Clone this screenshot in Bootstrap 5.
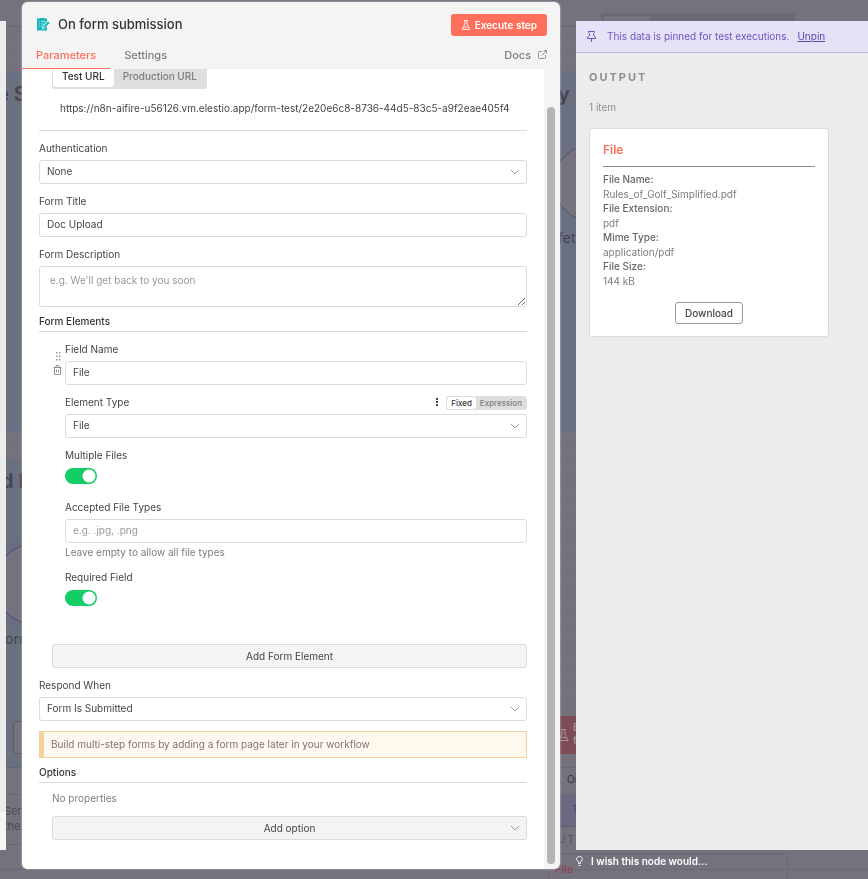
<!DOCTYPE html>
<html lang="en">
<head>
<meta charset="utf-8">
<meta name="viewport" content="width=device-width, initial-scale=1">
<title>On form submission</title>
<link href="https://cdn.jsdelivr.net/npm/bootstrap@5.3.0/dist/css/bootstrap.min.css" rel="stylesheet">
<style>
:root { --line: #dbdbdb; --ink: #444; --soft: #7d7d7d; --coral: #ff6f5c; }
body { font-family: Inter, "Liberation Sans", sans-serif; font-size: 10px; line-height: 16px; color: var(--ink); background: #75727e; }
.canvas-bg { position: fixed; inset: 0; width: 100%; height: 100%; z-index: -1; }
.stage { display: grid; grid-template-columns: 6px minmax(0, 538px) minmax(240px, 1fr); column-gap: 16px; min-height: 100vh; }
.input-edge { background: #ececec; margin: 21px 0 29px; border-bottom: 38px solid #f5f5f5; }
.node-panel { margin: 2px 0 10px; border-radius: 6px; background: #f4f4f4; box-shadow: 0 0 2px #ddd; }
.node-title { font-size: 13px; line-height: 20px; font-weight: 500; color: #333; }
.node-head { padding: 12px 13px 0 15px; height: 41px; }
.btn-run { background: var(--coral); color: #fff; font-size: 10px; font-weight: 600; line-height: 14px; padding: 4px 10px; border-radius: 3px; }
.btn-run:hover { background: #f0604d; color: #fff; }
.tab-row { height: 26px; font-size: 11px; padding-right: 13px; }
.tab-row a { color: var(--soft); font-weight: 500; text-decoration: none; padding: 0 14px; line-height: 26px; border-bottom: 1px solid transparent; }
.tab-row a.active { color: var(--coral); border-color: var(--coral); }
.tab-row a.docs { padding: 0; }
.form-pane { background: #fff; padding: 0 17px 28px 17px; border-bottom-left-radius: 6px; }
.scroll-rail { width: 16px; padding: 38px 5px 5px 3px; }
.scroll-thumb { background: #b5b5b5; border-radius: 4px; }
.seg { background: #dedede; border-radius: 3px; padding: 1px; }
.seg button { border: 0; background: transparent; color: var(--soft); border-radius: 3px; font-weight: 500; }
.seg button.on { background: #fff; color: #333; }
.url-seg { margin: -5px 0 0 13px; padding: 1px 1px 2px; }
.url-seg button { padding: 0 9px; line-height: 22px; }
.url-text { padding: 11px 0 14px 21px; border-bottom: 1px solid var(--line); }
.lab { display: block; margin: 9px 0 4px; color: var(--ink); }
.form-pane .form-control, .form-pane .form-select { font-size: 10px; line-height: 16px; height: 24px; min-height: 24px; padding: 2px 7px 4px; border: 1px solid var(--line); border-radius: 3px; color: var(--ink); }
.form-pane .form-control::placeholder { color: #999; }
.form-pane .form-select { background-image: url("data:image/svg+xml,%3Csvg xmlns='http://www.w3.org/2000/svg' viewBox='0 0 10 10'%3E%3Cpath d='M1 3l4 4 4-4' fill='none' stroke='%23999'/%3E%3C/svg%3E"); background-size: 10px 10px; background-position: right 6px center; }
.form-pane textarea.form-control { height: 41px; padding: 5px 10px; resize: vertical; }
.sec { margin: 6px 0 0; padding-bottom: 2px; font-weight: 500; font-size: 10px; line-height: 16px; color: #333; border-bottom: 1px solid var(--line); }
.tools { width: 26px; padding: 20px 3px 0 0; }
.tools button { border: 0; background: none; padding: 0; line-height: 0; }
.tools .grip { margin-right: 1px; }
.mode-seg { margin-top: 6px; }
.mode-seg button { font-size: 8px; line-height: 12px; padding: 0 4px; }
.form-pane .form-switch { padding: 0; min-height: 16px; margin: 5px 0 15px; line-height: 0; }
.form-pane .form-switch .form-check-input { margin: 0; float: none; width: 32px; height: 16px; border: 0; background-color: #13ce66; background-size: 16px 16px; background-image: url("data:image/svg+xml,%3Csvg xmlns='http://www.w3.org/2000/svg' viewBox='0 0 16 16'%3E%3Ccircle cx='8' cy='8' r='6.5' fill='%23fff'/%3E%3C/svg%3E"); }
.btn-wide, .form-pane .form-select.btn-wide { background-color: #f4f4f4; border: 1px solid var(--line); border-radius: 3px; font-size: 10px; line-height: 16px; padding: 3px; color: var(--ink); text-align: center; }
.add-row { margin: 23px 0 0 13px; }
.tip { margin-top: 10px; background: #fff8ee; border: 1px solid #f5d09a; border-left-width: 5px; padding: 4px 7px 5px; color: #7a7672; }
.opts { padding-left: 13px; }
.none-text { margin: 7px 0 10px; color: var(--soft); }
.hint { color: var(--soft); margin-top: 1px; }
.out-pane { background: #ececec; margin-top: 21px; }
.pin-bar { background: #e6e1f6; border-bottom: 1px solid #bdb1ea; color: #6a55c0; padding: 7px 11px 8px; gap: 11px; }
.pin-bar a { color: #5a45b5; margin-left: -3px; }
.out-body { padding: 16px 13px; }
.out-title { font-size: 11px; font-weight: 700; letter-spacing: 2px; color: #8d8d8d; line-height: 16px; margin: 0; }
.count { margin-top: 14px; color: #8d8d8d; }
.file-box { border: 1px solid #dcdcdc; border-radius: 3px; width: 240px; max-width: 100%; padding: 13px 13px 12px; margin-top: 13px; }
.file-box h2 { font-size: 12px; line-height: 16px; font-weight: 600; color: var(--coral); margin: 0 0 5px; padding-bottom: 8px; border-bottom: 1px solid #8c8c8c; }
.file-box dl { line-height: 14px; color: var(--soft); margin: 0 0 14px; }
.file-box dt { font-weight: 500; color: #666; line-height: 15px; }
.file-box dd { margin: 0; line-height: 14px; }
.btn-get { border: 1px solid #999; border-radius: 3px; font-size: 10px; line-height: 16px; padding: 2px 9px; font-weight: 500; color: #444; }
.wish { height: 29px; color: #fff; font-weight: 600; text-decoration: none; padding-bottom: 7px; }
</style>
<script src="https://cdn.jsdelivr.net/npm/bootstrap@5.3.0/dist/js/bootstrap.bundle.min.js"></script>
</head>
<body>
<svg class="canvas-bg" aria-hidden="true" font-family="Inter, sans-serif">
  <defs><pattern id="dots" width="14" height="14" patternUnits="userSpaceOnUse"><rect x="1" y="10" width="1" height="1" fill="#5c5966"/></pattern></defs>
  <rect width="100%" height="100%" fill="#75727e"/>
  <rect y="27" width="100%" height="740" fill="url(#dots)"/>
  <path d="M0 26.500H868" stroke="#6a6773"/>
  <rect x="-5" y="73" width="900" height="358" fill="#6b7081" stroke="#62708a"/>
  <rect x="-5" y="460" width="200" height="307" fill="#6b7081" stroke="#62708a"/>
  <rect x="601" y="13" width="194" height="20" rx="3" fill="#6c6975"/><rect x="604" y="16" width="46" height="14" rx="2" fill="#75727e"/>
  <g fill="#44434f" font-weight="600" font-size="20"><text x="-3" y="101">e S</text><text x="558" y="101">y</text><text x="1" y="488">d I</text></g>
  <g fill="#44434f" font-size="14"><text x="558" y="243">fet</text><text x="5" y="644">orm</text></g>
  <circle cx="593" cy="183" r="39" fill="#75727e" stroke="#55525f"/>
  <circle cx="36" cy="584" r="46" fill="#6b6c81"/><circle cx="36" cy="584" r="41" fill="#75727e" stroke="#4b4a78"/>
  <rect x="13.500" y="721.500" width="60" height="32" rx="3" fill="#75727e" stroke="#5e5b67"/>
  <rect x="540" y="716" width="120" height="38" fill="#7e4c57"/>
  <path d="M561 729.500h5M562 730v4l-3 6.500h9l-3-6.500v-4M560.500 737.500h6" fill="none" stroke="#a0929c"/>
  <g fill="#a0929c" font-size="10" font-weight="600"><text x="573" y="731">E</text><text x="573" y="744">f</text></g>
  <path d="M0 767.500H868M0 794.500H24M0 844.500H24" stroke="#696672"/>
  <rect x="550" y="794" width="40" height="32" fill="#6d6880"/><path d="M550 826.500h40" stroke="#5d5880"/>
  <g font-size="11" fill="#4c4a55"><text x="4" y="815">Ser</text><text x="4" y="830">the</text></g>
  <g font-size="10"><text x="567" y="783" fill="#33323c">Or</text><text x="572" y="813" fill="#4c4490">T</text><text x="558" y="843" fill="#55525e" letter-spacing="2">UT</text></g>
  <rect x="548.500" y="853.500" width="239" height="40" rx="2" fill="none" stroke="#696672"/>
  <path d="M0 869.500H868" stroke="#6c6975"/>
  <text x="555" y="873" font-size="11" font-weight="500" fill="#8a4450">File</text>
</svg>

<div class="stage">
  <div class="input-edge"></div>

  <main class="node-panel d-flex flex-column">
    <header class="node-head d-flex align-items-start">
      <svg class="me-2 mt-1" width="13" height="13" viewBox="0 0 13 13" aria-hidden="true"><path d="M0 .5h2.500V0h5v.5H10V3L6 7.500l-1 3.500 3-1 2-2v4.500H0z" fill="#15b8bd"/><path d="M6 10.500l.500-2.500 4.500-5 2 2-4.500 4.500z" fill="#15b8bd" stroke="#f4f4f4" stroke-width=".5"/><path d="M2 3.500h1M4 3.500h4M2 6h1M4 6h2.500M2 8.500h1M4 8.500h1" stroke="#c9f0f0" stroke-width=".8"/></svg>
      <h1 class="node-title mb-0 flex-grow-1">On form submission</h1>
      <button type="button" class="btn btn-run border-0 d-flex align-items-center gap-1"><svg width="10" height="10" viewBox="0 0 10 10" fill="none" stroke="#fff" stroke-width=".9" aria-hidden="true"><path d="M3 .5h4M4 .5v3.500L1.200 9.300h7.600L6 4V.5M2.500 7h5"/></svg>Execute step</button>
    </header>
    <nav class="tab-row d-flex align-items-end">
      <a class="active" href="#parameters">Parameters</a>
      <a href="#settings">Settings</a>
      <a class="docs ms-auto" href="#docs">Docs <svg width="9" height="9" viewBox="0 0 9 9" fill="none" stroke="#888" stroke-width=".9" class="ms-1 mb-1" aria-hidden="true"><path d="M4 1.500H1.500q-1 0-1 1v5q0 1 1 1h5q1 0 1-1V5M5.500.500h3v3M8.500.500l-5 5"/></svg></a>
    </nav>
    <div class="d-flex flex-grow-1">
      <form class="form-pane flex-grow-1 overflow-hidden">
        <div class="seg url-seg d-inline-flex align-top" role="group" aria-label="URL type">
          <button type="button" class="on">Test URL</button><button type="button">Production URL</button>
        </div>
        <div class="url-text">https://n8n-aifire-u56126.vm.elestio.app/form-test/2e20e6c8-8736-44d5-83c5-a9f2eae405f4</div>

        <label class="lab" for="auth">Authentication</label>
        <select class="form-select" id="auth"><option>None</option></select>
        <label class="lab" for="title">Form Title</label>
        <input class="form-control" id="title" value="Doc Upload">
        <label class="lab" for="desc">Form Description</label>
        <textarea class="form-control d-block" id="desc" placeholder="e.g. We'll get back to you soon"></textarea>

        <h2 class="sec">Form Elements</h2>
        <div class="d-flex">
          <div class="tools d-flex flex-column align-items-end gap-1">
            <button type="button" aria-label="Drag to reorder" class="grip"><svg width="6" height="9" viewBox="0 0 6 9" fill="#999"><path d="M1 0h1.500v1.500H1zM4 0h1.500v1.500H4zM1 3.500h1.500V5H1zM4 3.500h1.500V5H4zM1 7h1.500v1.500H1zM4 7h1.500v1.500H4z"/></svg></button>
            <button type="button" aria-label="Delete element"><svg width="9" height="10" viewBox="0 0 9 10" fill="none" stroke="#888" stroke-width=".9"><path d="M.5 2.500h8M1.500 2.500v7h6v-7M3 2.500v-2h3v2M3.500 4.500v3M5.500 4.500v3"/></svg></button>
          </div>
          <div class="flex-grow-1">
            <label class="lab" for="fname">Field Name</label>
            <input class="form-control" id="fname" value="File">
            <div class="d-flex align-items-center">
              <label class="lab" for="etype">Element Type</label>
              <svg class="ms-auto me-2 mt-1" width="2" height="8" viewBox="0 0 2 8" fill="#444" aria-hidden="true"><path d="M0 0h2v2H0zM0 3h2v2H0zM0 6h2v2H0z"/></svg>
              <div class="seg mode-seg d-flex" role="group" aria-label="Value mode"><button type="button" class="on">Fixed</button><button type="button">Expression</button></div>
            </div>
            <select class="form-select" id="etype"><option>File</option></select>
            <label class="lab mb-0" for="multi">Multiple Files</label>
            <div class="form-check form-switch"><input class="form-check-input" type="checkbox" role="switch" id="multi" checked></div>
            <label class="lab" for="types">Accepted File Types</label>
            <input class="form-control" id="types" placeholder="e.g. .jpg, .png">
            <div class="hint">Leave empty to allow all file types</div>
            <label class="lab mb-0" for="req">Required Field</label>
            <div class="form-check form-switch"><input class="form-check-input" type="checkbox" role="switch" id="req" checked></div>
          </div>
        </div>
        <div class="add-row"><button type="button" class="btn btn-wide w-100">Add Form Element</button></div>

        <label class="lab" for="respond">Respond When</label>
        <select class="form-select" id="respond"><option>Form Is Submitted</option></select>
        <div class="tip">Build multi-step forms by adding a form page later in your workflow</div>

        <h2 class="sec">Options</h2>
        <div class="opts">
          <p class="none-text">No properties</p>
          <select class="form-select btn-wide" aria-label="Add option"><option>Add option</option></select>
        </div>
      </form>
      <div class="scroll-rail d-flex"><div class="scroll-thumb flex-grow-1"></div></div>
    </div>
  </main>

  <div class="d-flex flex-column">
    <section class="out-pane flex-grow-1">
      <div class="pin-bar d-flex align-items-center">
        <svg width="9" height="11" viewBox="0 0 9 11" fill="none" stroke="#6a55c0" aria-hidden="true"><path d="M1.500.500h6v1l-1 1v2L8.500 6v1.500h-8V6l2-1.500v-2l-1-1zM4.500 7.500V11"/></svg>
        <span>This data is pinned for test executions.</span><a href="#unpin">Unpin</a>
      </div>
      <div class="out-body">
        <h2 class="out-title">OUTPUT</h2>
        <div class="count">1 item</div>
        <div class="file-box bg-white">
          <h2>File</h2>
          <dl><dt>File Name:</dt><dd>Rules_of_Golf_Simplified.pdf</dd><dt>File Extension:</dt><dd>pdf</dd><dt>Mime Type:</dt><dd>application/pdf</dd><dt>File Size:</dt><dd>144 kB</dd></dl>
          <div class="text-center"><button type="button" class="btn btn-get bg-white">Download</button></div>
        </div>
      </div>
    </section>
    <a href="#wish" class="wish d-flex align-items-center"><svg class="me-2" width="7" height="10" viewBox="0 0 7 10" fill="none" stroke="#fff" stroke-width=".9" aria-hidden="true"><path d="M2.500 7.500V6L.500 3.500C.500-.500 6.500-.500 6.500 3.500L4.500 6v1.500zM2.500 9.500h2"/></svg>I wish this node would...</a>
  </div>
</div>
</body>
</html>
